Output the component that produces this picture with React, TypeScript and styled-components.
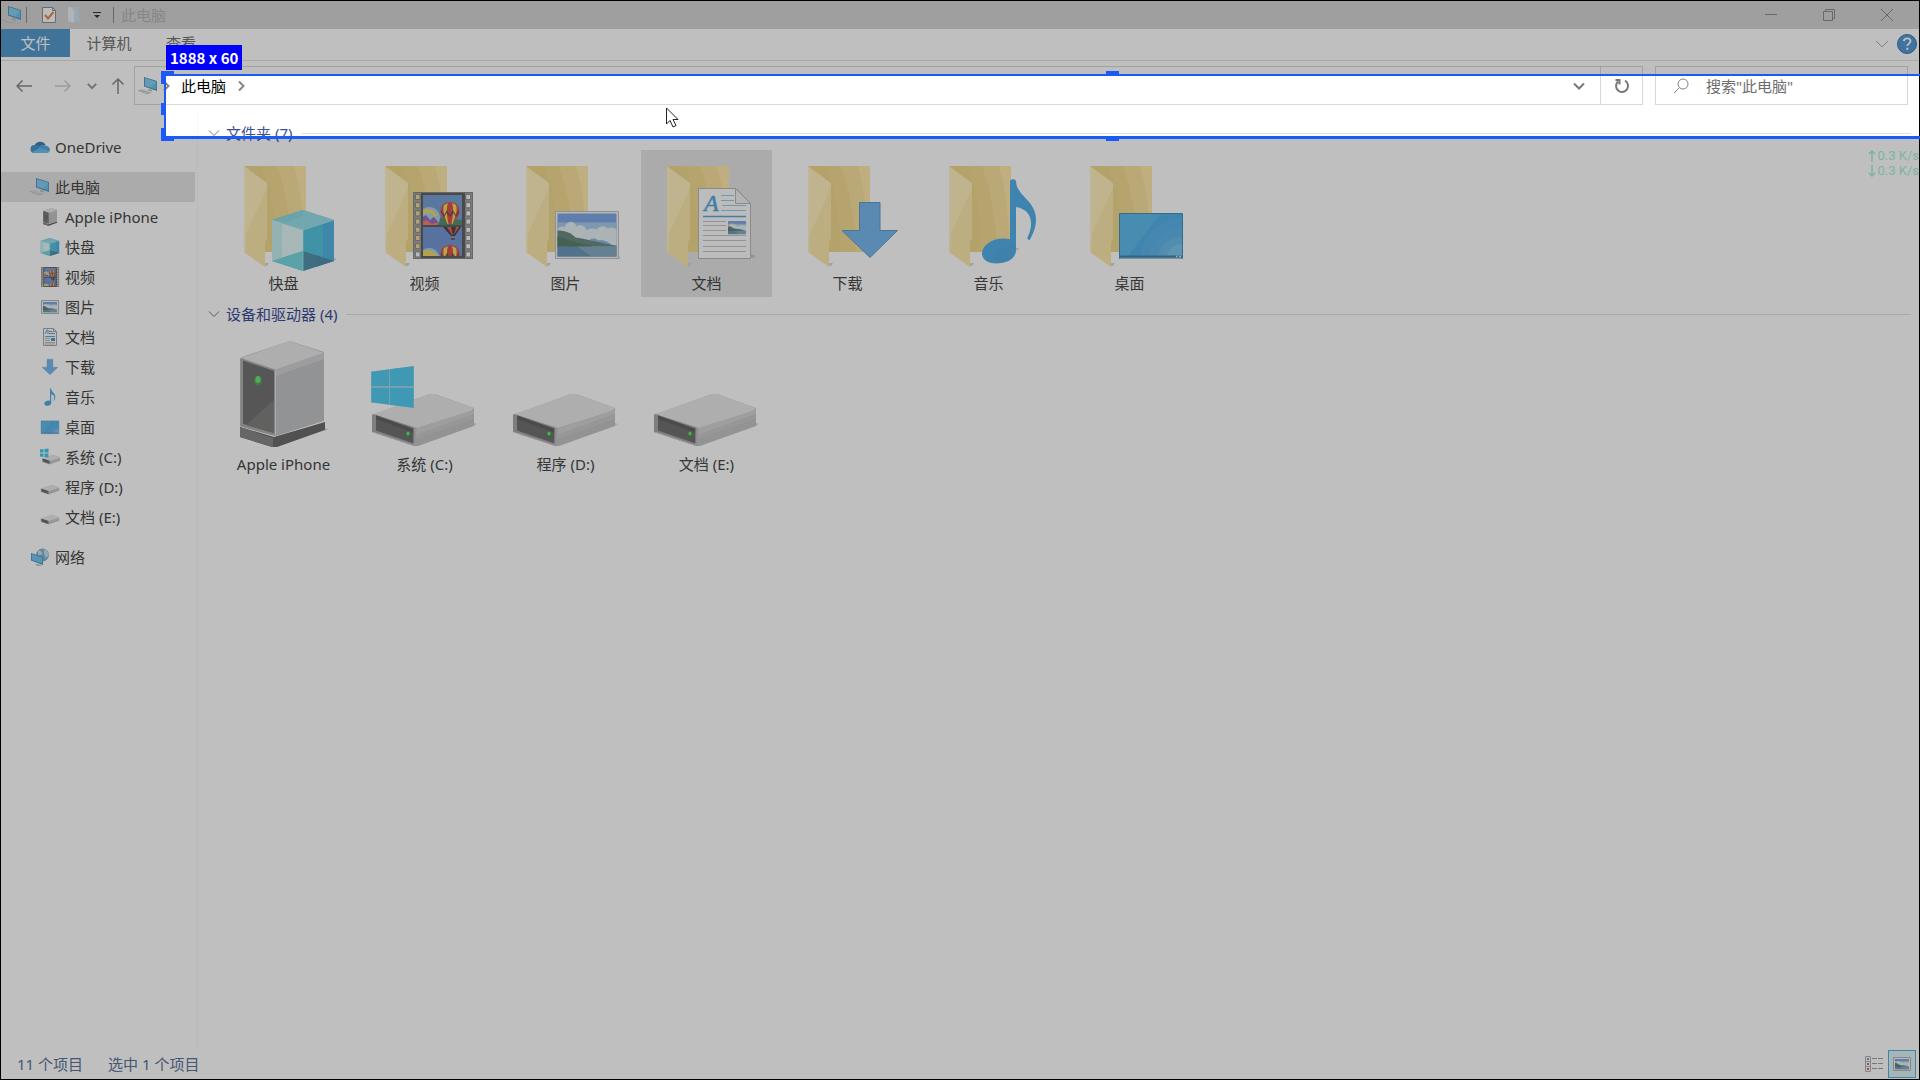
import React from 'react';
import styled, { createGlobalStyle, css } from 'styled-components';

const Global = createGlobalStyle`
  * { box-sizing: border-box; }
  body {
    margin: 0;
    background: #fff;
    font-family: "Noto Sans", "Noto Sans CJK SC", sans-serif;
    font-size: 15px;
    line-height: 20px;
    color: #484848;
  }
  button, input { font: inherit; color: inherit; }
`;

const plainButton = css`
  border: 0;
  padding: 0;
  margin: 0;
  background: none;
  display: flex;
  align-items: center;
  justify-content: center;
`;

const Screen = styled.div`
  position: relative;
  min-height: 100vh;
  display: flex;
  flex-direction: column;
  border: 1px solid #000;
  background: #fff;
`;

/* ---------- title bar ---------- */

const TitleBar = styled.header`
  display: flex;
  align-items: center;
  height: 28px;
  background: #d5d5d5;
  padding: 0 3px 0 1px;
`;

const Separator = styled.span<{ $before: number; $after: number }>`
  width: 1px;
  height: 16px;
  background: #8c8c8c;
  margin: 0 ${(p) => p.$after}px 0 ${(p) => p.$before}px;
`;

const QuickButton = styled.button<{ $width: number }>`
  ${plainButton}
  width: ${(p) => p.$width}px;
  height: 28px;
`;

const WindowTitle = styled.h1`
  margin: 0;
  flex: 1;
  font-size: 15px;
  font-weight: 400;
  color: #b4b4b4;
`;

const CaptionButton = styled.button`
  ${plainButton}
  width: 58px;
  height: 26px;
`;

/* ---------- ribbon ---------- */

const Ribbon = styled.nav`
  display: flex;
  align-items: flex-start;
  height: 32px;
  border-bottom: 1px solid #e0e0e0;
`;

const RibbonTab = styled.button<{ $width: number; $primary?: boolean }>`
  ${plainButton}
  width: ${(p) => p.$width}px;
  height: 28px;
  ${(p) => (p.$primary ? 'background: #559acd; color: #fff;' : 'color: #757575;')}
`;

const RibbonSpace = styled.span`
  flex: 1;
`;

const RibbonTool = styled.button`
  ${plainButton}
  width: 25px;
  height: 30px;
`;

/* ---------- address row ---------- */

const AddressRow = styled.div`
  display: flex;
  align-items: center;
  height: 51px;
  padding: 5px 11px 7px 3px;
`;

const NavButton = styled.button<{ $width: number }>`
  ${plainButton}
  width: ${(p) => p.$width}px;
  height: 39px;
`;

const AddressBox = styled.div`
  flex: 1;
  display: flex;
  align-items: center;
  height: 39px;
  border: 1px solid #d9d9d9;
  padding-left: 3px;
`;

const Crumb = styled.button`
  ${plainButton}
  height: 37px;
  padding: 0 7px;
  color: #000;
`;

const CrumbArrow = styled.button`
  ${plainButton}
  width: 16px;
  height: 37px;
`;

const BoxSpace = styled.span`
  flex: 1;
`;

const BoxTool = styled.button<{ $divided?: boolean }>`
  ${plainButton}
  width: 42px;
  height: 37px;
  ${(p) => p.$divided && 'border-left: 1px solid #d9d9d9;'}
`;

const SearchBox = styled.label`
  display: flex;
  align-items: center;
  width: 253px;
  height: 39px;
  margin-left: 12px;
  border: 1px solid #d9d9d9;
  padding-left: 17px;
  gap: 17px;
`;

const SearchInput = styled.input`
  flex: 1;
  min-width: 0;
  border: 0;
  padding: 0;
  background: none;
  outline: 0;
  &::placeholder { color: #6d6d6d; opacity: 1; }
`;

/* ---------- body ---------- */

const Body = styled.div`
  flex: 1;
  display: flex;
`;

const Tree = styled.nav`
  width: 196px;
  padding: 20px 2px 0 0;
`;

const TreeGroup = styled.ul`
  list-style: none;
  margin: 0 0 10px;
  padding: 0;
`;

const TreeLink = styled.a<{ $child?: boolean; $current?: boolean }>`
  display: flex;
  align-items: center;
  height: 30px;
  padding-left: ${(p) => (p.$child ? 39 : 29)}px;
  gap: 5px;
  color: inherit;
  text-decoration: none;
  white-space: nowrap;
  ${(p) => p.$current && 'background: #e4e4e4;'}
`;

const Content = styled.main`
  flex: 1;
  min-width: 0;
  border-left: 1px solid #f9f9f9;
  padding: 4px 8px 0 10px;
`;

const GroupHeader = styled.h2`
  display: flex;
  align-items: center;
  gap: 6px;
  height: 34px;
  margin: 0;
  font-size: 15px;
  font-weight: 400;
  color: #3c5096;
  white-space: nowrap;
  &::after {
    content: "";
    flex: 1;
    height: 1px;
    margin-left: 3px;
    background: #e2e2e2;
  }
`;

const Tiles = styled.div`
  display: flex;
  flex-wrap: wrap;
  gap: 10px;
  padding-left: 10px;
`;

const Tile = styled.button<{ $selected?: boolean }>`
  border: 0;
  padding: 0;
  display: flex;
  flex-direction: column;
  align-items: center;
  width: 131px;
  height: 147px;
  background: ${(p) => (p.$selected ? '#e4e4e4' : 'none')};
`;

const TileArt = styled.svg`
  display: block;
  width: 131px;
  height: 121px;
  overflow: visible;
`;

const TileLabel = styled.span`
  line-height: 24px;
`;

/* ---------- status bar ---------- */

const StatusBar = styled.footer`
  display: flex;
  align-items: center;
  height: 30px;
  padding: 0 3px 0 16px;
  color: #5c7498;
`;

const StatusText = styled.span`
  margin-right: 25px;
`;

const ViewButton = styled.button<{ $active?: boolean }>`
  ${plainButton}
  width: 28px;
  height: 28px;
  ${(p) => p.$active && 'border: 1px solid #55b4dc; background: #dff0f6;'}
`;

/* ---------- capture overlay ---------- */

const Overlay = styled.div`
  position: absolute;
  inset: -1px;
  overflow: hidden;
  pointer-events: none;
`;

const Selection = styled.div`
  position: absolute;
  left: 164px;
  top: 74px;
  width: 1896px;
  height: 65px;
  border: solid #1a5af5;
  border-width: 2px 2px 3px;
  box-shadow: 0 0 0 9999px rgba(0, 0, 0, 0.25);
`;

const Handle = styled.i<{ $at: 'tl' | 'l' | 'bl' | 't' | 'b' }>`
  position: absolute;
  width: 13px;
  height: 13px;
  border: 0 solid #1a5af5;
  ${(p) =>
    ({
      tl: 'left: -5px; top: -5px; border-width: 5px 0 0 5px;',
      l: 'left: -5px; top: calc(50% - 3px); height: 12px; border-width: 0 0 0 5px;',
      bl: 'left: -5px; bottom: -5px; border-width: 0 0 5px 5px;',
      t: 'left: calc(50% - 6px); top: -5px; border-width: 5px 0 0;',
      b: 'left: calc(50% - 6px); bottom: -5px; border-width: 0 0 5px;',
    })[p.$at]}
`;

const SizeBadge = styled.output`
  position: absolute;
  left: 166px;
  top: 45px;
  height: 25px;
  padding: 0 4px;
  background: #0000ff;
  color: #fff;
  font-family: "Noto Sans CJK SC", sans-serif;
  font-weight: 700;
  line-height: 25px;
  white-space: nowrap;
`;

const NetSpeed = styled.div`
  position: absolute;
  right: 1px;
  top: 148px;
  display: flex;
  flex-direction: column;
  color: #7db3a5;
  font-family: Roboto, sans-serif;
  font-size: 13px;
  line-height: 15px;
  white-space: nowrap;
`;

const SpeedLine = styled.span`
  display: flex;
  align-items: center;
  gap: 2px;
`;

const Cursor = styled.svg`
  position: absolute;
  left: 666px;
  top: 107px;
`;

/* ---------- artwork, drawn on a 131 x 121 tile ---------- */

const Folder = () => (
  <g>
    <path d="M47 113h4l-2 3h-3z" fill="#d8d8d8" />
    <path d="M26 16h61l1 1v84l-1 1H40L26 90z" fill="#f8e29f" />
    <path d="M26 16h33c8 22 14 52 15 86H45z" fill="#f3db94" />
    <path d="M26 16h18c9 22 14 50 14 86H40z" fill="#f0d78c" opacity=".6" />
    <path d="M76 16h11l1 1v84H87C86 70 83 40 76 16z" fill="#ffeaab" />
    <path d="M26 16l23 17v55l-2 4v25L26 102z" fill="#fff0bd" />
    <path d="M49 38v50l-2 4v25L26 102V88z" fill="#fce7a8" opacity=".75" />
    <path d="M27 17v85" stroke="#fff6d2" strokeWidth="1" />
  </g>
);

const Cube = () => (
  <g>
    <path d="M116 108l3 1-3 2z" fill="#ddd" />
    <path d="M54 70l31-10 31 10v41l-31 10-31-10z" fill="#6cd0e0" />
    <path d="M54 70l31-10 31 10-31 10z" fill="#98dfea" />
    <path d="M54 70l31-10v5l-20 9z" fill="#86d3de" opacity=".6" />
    <path d="M54 70l31 10v21l-31 10z" fill="#e0f6f6" />
    <path d="M54 70l10 3v35l-10 3z" fill="#c6ecef" />
    <path d="M85 80l31-10v41l-31-10z" fill="#56c4df" />
    <path d="M105 74l11-4v41l-11-4z" fill="#54b4e0" />
    <path d="M54 111l31-10v20z" fill="#79d8df" />
    <path d="M85 101l31 10-31 10z" fill="#5495aa" />
    <path d="M98 105l18 6-18 6z" fill="#4f8db4" opacity=".6" />
    <path d="M54 70l31 10v41M85 80l31-10" fill="none" stroke="#b4edf2" strokeWidth=".7" />
  </g>
);

const Balloon = ({ x, y }: { x: number; y: number }) => (
  <g transform={`translate(${x} ${y})`}>
    <path d="M-9.500 9C-9.500 3-5 0 0 0s9.500 3 9.500 9c0 6-5 9-7 13h-5C-4.500 18-9.500 15-9.500 9z" fill="#d85550" />
    <path d="M-6 3C-8 8-5 16-2.500 22h1C-3 14-4 7-2 1zM6 3c2 5-1 13-3.500 19h-1C3 14 4 7 2 1z" fill="#f2dc5c" />
    <path d="M-9 8l3 5 3-5 3 5 3-5 3 5 3-5v2l-3 5-3-4-3 4-3-4-3 4-3-5z" fill="#55454c" opacity=".7" />
  </g>
);

const Film = () => (
  <g>
    <path d="M54 42h60v67H54z" fill="#8a8a8a" />
    <path d="M55 43h7v65h-7zM106 43h7v65h-7z" fill="#a6a6a6" />
    {Array.from({ length: 8 }, (_, i) => (
      <g key={i} stroke="#777" strokeWidth=".7">
        <path d={`M56.500 ${44.5 + i * 8.2}h4.500v5h-4.500z`} fill={i < 7 ? '#f0d9a0' : '#fafafa'} />
        <path d={`M107 ${44.5 + i * 8.2}h4.500v5h-4.500z`} fill="#fafafa" />
      </g>
    ))}
    <path d="M62 43h44v65H62z" fill="#626262" />
    <svg x="64" y="45" width="39" height="30" viewBox="0 0 39 30">
      <path d="M0 0h39v30H0z" fill="#789fd6" />
      <path d="M0 21l39 4v5H0z" fill="#559070" />
      <circle cx="6" cy="23" r="11" fill="#a9cfec" />
      <path d="M-3 17c7-6 14-2 18 3l-3 2C8 16 3 18-2 20z" fill="#efd767" />
      <path d="M-2 23l5-3 4 5 4-3 5 6-2 3H-2z" fill="#9a6cb8" />
      <path d="M-2 27l6-2 5 4 6-2v4H-2z" fill="#ec8478" />
      <Balloon x={27} y={7} />
    </svg>
    <svg x="64" y="77" width="39" height="29" viewBox="0 0 39 29">
      <path d="M0 0h39v29H0z" fill="#7599d4" />
      <path d="M20 0h18l-6 9h-4z" fill="#55454c" />
      <path d="M24 0h4l2 8h-1zM33 0h3l-5 8z" fill="#e06a58" />
      <path d="M28 11h4v2h-4z" fill="#7a6050" />
      <circle cx="6" cy="32" r="11" fill="#a9cfec" />
      <path d="M-3 26c7-6 14-2 18 3H0z" fill="#efd767" />
      <Balloon x={27} y={18} />
    </svg>
  </g>
);

const Landscape = () => (
  <g>
    <path d="M0 0h59v43H0z" fill="#7fa9e6" />
    <path d="M0 9h59v24H0z" fill="#a9cbee" />
    <path d="M0 16c3-4 6-3 7-2 2-7 10-8 12-1 5-3 9 0 10 4 4-3 8-2 10-1 4-4 8-4 11-1 4-2 7-1 9 1v17H0z" fill="#e6eff2" />
    <path d="M28 30c5-6 9-6 13-3 6-1 10 2 14 5z" fill="#8db5de" />
    <path d="M0 17c8 0 13 2 18 7 14 2 25 6 41 8v1H0z" fill="#6d8c80" />
    <path d="M0 23c12 3 22 8 34 9v2H0z" fill="#5e8270" />
    <path d="M0 33h59v10H0z" fill="#6d98b8" />
    <path d="M20 33h39v10H34z" fill="#9dbccc" opacity=".55" />
  </g>
);

const Picture = () => (
  <g>
    <path d="M118 106l3 2-3 1z" fill="#ccc" />
    <path d="M55.500 61.500h63v47h-63z" fill="#f4f4f4" stroke="#c0c0c0" />
    <g transform="translate(57.500 63.500)"><Landscape /></g>
  </g>
);

const SmallPicture = () => (
  <g>
    <path d="M1.500 3.500h17v13h-17z" fill="#f6f6f6" stroke="#b4b4b4" />
    <g transform="translate(3 5) scale(.237)"><Landscape /></g>
  </g>
);

const Document = () => (
  <g>
    <path d="M110 104l5 2-3 2h-3z" fill="#c8c8c8" />
    <path d="M57.500 38.500H95l14.500 15v55h-52z" fill="#fbfbfb" stroke="#b9b9b9" />
    <path d="M94.500 38.500v15h15z" fill="#f0f0f0" stroke="#b9b9b9" />
    <text x="63" y="61" fontFamily="Liberation Serif, serif" fontStyle="italic" fontSize="24" fill="#56a8dc" stroke="#56a8dc" strokeWidth=".5">A</text>
    <path d="M80 45.500h13M80 50.500h13M81 55.500h24M80 60.500h25" stroke="#9cc9ea" />
    <path d="M62 66.500h43" stroke="#5aa9da" strokeWidth="1.500" />
    <path d="M62 71.500h23M62 75.500h23M62 80.500h23M62 85.500h43M62 90.500h43M62 96.500h43M62 101.500h43" stroke="#c4c4c4" />
    <g transform="translate(87 71) scale(.305)"><Landscape /></g>
  </g>
);

const SmallDocument = () => (
  <g>
    <path d="M3.500 1.500h10l3 3v14h-13z" fill="#fbfbfb" stroke="#a8a8a8" />
    <path d="M13.500 1.500v3h3" fill="none" stroke="#a8a8a8" />
    <path d="M5 7l2-4h1v4M9 4.500h3.500M9 6.500h6M5 9.500h10" fill="none" stroke="#5aa9da" />
    <path d="M5 11.500h5M5 13.500h5M5 15.500h10M5 17h10" stroke="#bcbcbc" />
    <path d="M11 11h4v3h-4z" fill="#5a96b8" />
  </g>
);

const Download = () => (
  <path d="M77.500 52.500h20.500v28h17.500L88 107.500 60 80.500h17.500z" fill="#78b9ee" stroke="#5f9ecc" />
);

const Note = () => (
  <g>
    <path d="M92 98h5l-4 3z" fill="#ddd" />
    <path d="M87 31.500c0-3 6-3 6 0 1 15 20 19 20 38 0 8-3 14-6 20-1 1-3 0-2.500-2 7-14 4-28-11.500-30.500v43c0 8-8 13.500-20 13.500-8 0-14-4-14-10 0-9 12-17.500 28-14.500z" fill="#54b0ea" />
    <path d="M67 108l24-16c3 10-3 19-14 21z" fill="#54ace3" />
  </g>
);

const Desktop = () => (
  <g>
    <path d="M55.500 63.500h63v45h-63z" fill="#61bbee" stroke="#4690bc" />
    <path d="M96 64h22v42H64z" fill="#56b2ea" />
    <path d="M76 106c3-22 20-36 42-38v38z" fill="#5cb5ea" />
    <path d="M85 106c3-16 16-27 33-28v28z" fill="#62b7ea" />
    <path d="M94 106c2-11 11-18 24-19v19z" fill="#6bbdea" />
    <path d="M103 106c1-7 7-12 15-12v12z" fill="#7cc6ee" />
    <path d="M56 106.500h62" stroke="#4a83ab" strokeWidth="2" />
    <path d="M56 108.500h62" stroke="#a7c3cc" />
    <path d="M112 106.500h1.500M115 106.500h2" stroke="#d9edf6" strokeWidth="1.500" />
  </g>
);

const Tower = () => (
  <g>
    <path d="M107 97l3 1-3 2z" fill="#d8d8d8" />
    <path d="M22 96l34 10 51-15v8l-48 17h-5L22 106z" fill="#6c6c6c" />
    <path d="M22 96l33 11v9L22 106z" fill="#888" />
    <path d="M22 28l2-2 48-16 34 11v68l-48 16-36-10z" fill="#c3c4c7" />
    <path d="M23 27l49-17 34 12-49 17z" fill="#e8e8ea" />
    <path d="M57 39l49-17v68l-49 15z" fill="#c3c4c7" />
    <path d="M57 39l49-17v6L58 45z" fill="#d2d2d5" />
    <path d="M22.500 27L57 38.500V105l-34.500-9.500z" fill="#b0b0b0" />
    <path d="M25 29.500l31 10.500v62L25 93z" fill="#737373" />
    <path d="M56 69v33l-28-8z" fill="#828280" />
    <path d="M57.500 39v66" stroke="#e3e3e3" />
    <ellipse cx="40" cy="49.500" rx="4" ry="5" fill="#57a75c" />
    <ellipse cx="40" cy="48.500" rx="2.500" ry="3.500" fill="#72e27d" />
  </g>
);

const Drive = () => (
  <g>
    <path d="M115 92l3 1-3 2z" fill="#ddd" />
    <path d="M13 84l58-21h5l39 14v18l-56 20h-4L13 101z" fill="#c3c4c6" />
    <path d="M14 83l57-20h5l39 14-3 3-54 17z" fill="#e8e8ea" />
    <path d="M58 97l57-18v4l-58 21z" fill="#d3d3d4" />
    <path d="M57 104l58-21v5l-58 20z" fill="#c8cac9" />
    <path d="M13 84l1-1 40 13 2 2v17L13 101z" fill="#a8a8a8" />
    <path d="M17 84.500l38 13.500v14.500L17 99.500z" fill="#727272" />
    <path d="M17 84.500l38 13.500v4L17 88z" fill="#656565" />
    <path d="M14 101l41 13.500V98" fill="none" stroke="#d0d0d0" />
    <ellipse cx="49" cy="103" rx="2.500" ry="3" fill="#4c8e50" />
    <ellipse cx="49" cy="102.500" rx="1.500" ry="2" fill="#6ce578" />
  </g>
);

const SystemDrive = () => (
  <g>
    <Drive />
    <path d="M12 40.500L55 35v42l-43-5.500z" fill="#9cd6e6" />
    <path d="M12.500 41l17.500-2.500V55H12.500zM31 38.300L54.500 35.300V55H31zM12.500 57H30v16.500l-17.500-2.200zM31 57h23.500v19.700L31 73.700z" fill="#54cdf0" />
  </g>
);

const SmallSystemDrive = () => (
  <g>
    <g transform="translate(0 -3) scale(.175)"><Drive /></g>
    <path d="M0 2.500l3.500-.5v3.500H0zM4.500 2L8.500 1.500v4h-4zM0 6.500h3.500V10L0 9.500zM4.500 6.500h4v4l-4-.5z" fill="#46c8ec" />
  </g>
);

/* ---------- small icons ---------- */

const Computer = ({ size = 20 }: { size?: number }) => (
  <svg width={size} height={size} viewBox="0 0 20 20" aria-hidden="true">
    <path d="M6 1l13 4v10L6 10.500z" fill="#5d93b8" />
    <path d="M7 2.200l11.300 3.600v7.800L7 9.800z" fill="#6cc2ef" />
    <path d="M7 2.200l11.300 3.600-5 5.600L7 9.800z" fill="#85cff4" />
    <path d="M0 14.500l4-1.500 9 3.500-4 1.500z" fill="#d4d8dc" />
    <path d="M0 14.500l9 3.500 4-1.500" fill="none" stroke="#a9b0b6" strokeWidth=".8" strokeDasharray="1.500 1" />
    <path d="M10 13l4 1v1.500l-4-1z" fill="#b6bcc2" />
  </svg>
);

const Cloud = () => (
  <svg width="20" height="20" viewBox="0 0 20 20" aria-hidden="true">
    <path d="M4.500 9A6 6 0 0 1 15.500 8c-3 0-6 3-8 5z" fill="#3f7fb0" />
    <path d="M4.500 16a4 4 0 0 1 0-8c3-.5 5 1 12 7z" fill="#4c96cc" />
    <path d="M8 11.500C10 8 13 7 15.500 8.500 18 9 20 10.500 20 12.700c0 1-.4 1.600-.9 2.100z" fill="#5aaee0" />
    <path d="M2 15.300L10 11l9.300 3.700c-.7.900-1.600 1.300-2.800 1.300h-12C3.500 16 2.700 15.800 2 15.300z" fill="#6bc0ee" />
  </svg>
);

const Globe = () => (
  <svg width="20" height="20" viewBox="0 0 20 20" aria-hidden="true">
    <circle cx="12.500" cy="8" r="6.500" fill="#7eb6d6" />
    <path d="M8 3.500c3 0 5 2 4 4l-4 1zM14 2c3 1 5 4 5 6l-3 3-2-4z" fill="#c5e0ec" />
    <path d="M1 6l12 4v8L1 13.500z" fill="#4f92be" />
    <path d="M1.800 7l10.400 3.600v6L1.800 13z" fill="#78c6f0" />
    <path d="M5 17l4 .5 3 1.500-5-.3z" fill="#bbb" />
  </svg>
);

const MiniIcon = styled.svg`
  width: 20px;
  height: 20px;
  flex: none;
`;

type ChevronProps = { dir?: 'down' | 'right'; width?: number; color?: string; weight?: number };

const Chevron = ({ dir = 'down', width = 10, color = '#7a7a7a', weight = 1 }: ChevronProps) => (
  <svg width={width} height={width} viewBox="0 0 12 12" aria-hidden="true">
    <path d={dir === 'down' ? 'M1 3.500l5 5 5-5' : 'M4 1.500L8.500 6 4 10.500'} fill="none" stroke={color} strokeWidth={(weight * 12) / width} />
  </svg>
);

/* ---------- data ---------- */

type Entry = { name: string; box: string; art: React.ReactNode; small?: React.ReactNode };

const folders: Entry[] = [
  { name: '快盘', box: '52 57 67 67', art: <Cube /> },
  { name: '视频', box: '50 42 67 67', art: <Film /> },
  { name: '图片', box: '0 0 20 20', art: <Picture />, small: <SmallPicture /> },
  { name: '文档', box: '0 0 20 20', art: <Document />, small: <SmallDocument /> },
  { name: '下载', box: '53 46 70 68', art: <Download /> },
  { name: '音乐', box: '38 22 98 98', art: <Note /> },
  { name: '桌面', box: '52 50 70 70', art: <Desktop /> },
];

const devices: Entry[] = [
  { name: 'Apple iPhone', box: '4 4 120 120', art: <Tower /> },
  { name: '系统 (C:)', box: '0 0 20 20', art: <SystemDrive />, small: <SmallSystemDrive /> },
  { name: '程序 (D:)', box: '8 18 112 112', art: <Drive /> },
  { name: '文档 (E:)', box: '8 18 112 112', art: <Drive /> },
];

const treeChildren: Entry[] = [devices[0], ...folders, ...devices.slice(1)];

export default function App() {
  return (
    <Screen>
      <Global />
      <TitleBar>
        <Computer />
        <Separator $before={4} $after={9} />
        <QuickButton $width={26} aria-label="属性">
          <svg width="16" height="18" viewBox="0 0 16 18">
            <path d="M1.500 1.500h10l3 3v12h-13z" fill="#fafafa" stroke="#8f8f8f" />
            <path d="M11.500 1.500v3h3" fill="none" stroke="#8f8f8f" />
            <path d="M4 9l3 3.500L12.500 6" fill="none" stroke="#e58a45" strokeWidth="2" />
          </svg>
        </QuickButton>
        <QuickButton $width={24} aria-label="新建文件夹">
          <svg width="14" height="18" viewBox="0 0 14 18">
            <path d="M5 1h7v11h1v4H5z" fill="#cfe0ea" />
            <path d="M1 1h3l3 3v13l-6-2z" fill="#e8f0f5" />
          </svg>
        </QuickButton>
        <QuickButton $width={22} aria-label="自定义快速访问工具栏">
          <svg width="8" height="8" viewBox="0 0 8 8">
            <path d="M0 1.500h8" stroke="#333" />
            <path d="M1 4h6L4 7z" fill="#333" />
          </svg>
        </QuickButton>
        <Separator $before={5} $after={7} />
        <WindowTitle>此电脑</WindowTitle>
        <CaptionButton aria-label="最小化">
          <svg width="12" height="12"><path d="M0 5.500h12" stroke="#8c8c8c" /></svg>
        </CaptionButton>
        <CaptionButton aria-label="还原">
          <svg width="12" height="12" fill="none" stroke="#8c8c8c"><path d="M.5 2.500h9v9h-9zM2.500 2.500v-2h9v9h-2" /></svg>
        </CaptionButton>
        <CaptionButton aria-label="关闭">
          <svg width="12" height="12"><path d="M0 0l12 12M12 0L0 12" stroke="#8c8c8c" /></svg>
        </CaptionButton>
      </TitleBar>

      <Ribbon>
        <RibbonTab $primary $width={69}>文件</RibbonTab>
        <RibbonTab $width={78}>计算机</RibbonTab>
        <RibbonTab $width={66}>查看</RibbonTab>
        <RibbonSpace />
        <RibbonTool aria-label="展开功能区"><Chevron width={14} color="#aaa" /></RibbonTool>
        <RibbonTool aria-label="帮助">
          <svg width="20" height="20" viewBox="0 0 20 20">
            <circle cx="10" cy="10" r="9.500" fill="#559bd8" stroke="#4478a8" />
            <path d="M6.800 7.200C7 5.300 8.300 4.300 10.200 4.300c2 0 3.300 1.100 3.300 2.800 0 2.500-3.200 2.500-3.200 5" fill="none" stroke="#fff" strokeWidth="1.800" />
            <path d="M9.300 13.800h2v2h-2z" fill="#fff" />
          </svg>
        </RibbonTool>
      </Ribbon>

      <AddressRow>
        <NavButton $width={39} aria-label="后退">
          <svg width="16" height="14" fill="none" stroke="#8a8a8a" strokeWidth="1.500"><path d="M1 7h15M6.500 1.500L1 7l5.500 5.500" /></svg>
        </NavButton>
        <NavButton $width={39} aria-label="前进">
          <svg width="16" height="14" fill="none" stroke="#d0d0d0" strokeWidth="1.500"><path d="M0 7h15M9.500 1.500L15 7l-5.500 5.500" /></svg>
        </NavButton>
        <NavButton $width={20} aria-label="最近浏览的位置"><Chevron width={10} color="#999" weight={2} /></NavButton>
        <NavButton $width={32} aria-label="上移">
          <svg width="14" height="16" fill="none" stroke="#8a8a8a" strokeWidth="1.500"><path d="M7 1v15M1.500 6.500L7 1l5.500 5.500" /></svg>
        </NavButton>
        <AddressBox>
          <Computer />
          <CrumbArrow aria-label="展开"><Chevron dir="right" width={12} weight={2} color="#858585" /></CrumbArrow>
          <Crumb>此电脑</Crumb>
          <CrumbArrow aria-label="展开"><Chevron dir="right" width={12} weight={2} color="#858585" /></CrumbArrow>
          <BoxSpace />
          <BoxTool aria-label="以前的位置"><Chevron width={12} weight={2} color="#777" /></BoxTool>
          <BoxTool $divided aria-label="刷新">
            <svg width="16" height="16" fill="none" stroke="#777" strokeWidth="2">
              <path d="M11 2.700A6 6 0 1 1 4 3.500M1.500 2h4v4.500" />
            </svg>
          </BoxTool>
        </AddressBox>
        <SearchBox>
          <svg width="16" height="16" fill="none" stroke="#7d858c" aria-hidden="true">
            <circle cx="10" cy="6" r="5" />
            <path d="M6.500 9.500L1 15" />
          </svg>
          <SearchInput aria-label="搜索" placeholder={'搜索"此电脑"'} />
        </SearchBox>
      </AddressRow>

      <Body>
        <Tree>
          <TreeGroup>
            <li><TreeLink href="#onedrive"><Cloud />OneDrive</TreeLink></li>
          </TreeGroup>
          <TreeGroup>
            <li><TreeLink href="#pc" $current><Computer />此电脑</TreeLink></li>
            {treeChildren.map((e) => (
              <li key={e.name}>
                <TreeLink href={'#' + e.name} $child>
                  <MiniIcon viewBox={e.box} aria-hidden="true">{e.small ?? e.art}</MiniIcon>
                  {e.name}
                </TreeLink>
              </li>
            ))}
          </TreeGroup>
          <TreeGroup>
            <li><TreeLink href="#network"><Globe />网络</TreeLink></li>
          </TreeGroup>
        </Tree>
        <Content>
          <GroupHeader><Chevron width={12} />文件夹 (7)</GroupHeader>
          <Tiles>
            {folders.map((e) => (
              <Tile key={e.name} $selected={e.name === '文档'}>
                <TileArt viewBox="0 0 131 121" aria-hidden="true"><Folder />{e.art}</TileArt>
                <TileLabel>{e.name}</TileLabel>
              </Tile>
            ))}
          </Tiles>
          <GroupHeader><Chevron width={12} />设备和驱动器 (4)</GroupHeader>
          <Tiles>
            {devices.map((e) => (
              <Tile key={e.name}>
                <TileArt viewBox="0 0 131 121" aria-hidden="true">{e.art}</TileArt>
                <TileLabel>{e.name}</TileLabel>
              </Tile>
            ))}
          </Tiles>
        </Content>
      </Body>

      <StatusBar>
        <StatusText>11 个项目</StatusText>
        <StatusText>选中 1 个项目</StatusText>
        <BoxSpace />
        <ViewButton aria-label="详细信息">
          <svg width="18" height="16" fill="none">
            <path d="M.5.5h5v15h-5zM.5 5.500h5M.5 10.500h5" stroke="#b0b0b0" />
            <path d="M2 2h2v2H2z" fill="#5ea8b8" />
            <path d="M2 7h2v2H2z" fill="#b87a5e" />
            <path d="M2 12h2v2H2z" fill="#d8604e" />
            <path d="M7 2.500h5M13 2.500h5M7 7.500h5M13 7.500h5M7 12.500h5M13 12.500h5" stroke="#a0a0a0" />
          </svg>
        </ViewButton>
        <ViewButton $active aria-label="大缩略图">
          <svg width="20" height="20" viewBox="0 0 20 20"><SmallPicture /></svg>
        </ViewButton>
      </StatusBar>

      <Overlay>
        <Selection>
          <Handle $at="tl" />
          <Handle $at="l" />
          <Handle $at="bl" />
          <Handle $at="t" />
          <Handle $at="b" />
        </Selection>
        <SizeBadge>1888 x 60</SizeBadge>
        <NetSpeed>
          {['M4 12V1M1 4l3-3 3 3', 'M4 0v11M1 8l3 3 3-3'].map((d) => (
            <SpeedLine key={d}>
              <svg width="8" height="12" fill="none" stroke="currentColor" strokeWidth="1.500"><path d={d} /></svg>
              0.3 K/s
            </SpeedLine>
          ))}
        </NetSpeed>
        <Cursor width="14" height="22" viewBox="0 0 14 22">
          <path d="M.5 1v16l3.500-3.500L7 20l3-1.500-3-6h5z" fill="#fff" stroke="#222" />
        </Cursor>
      </Overlay>
    </Screen>
  );
}
